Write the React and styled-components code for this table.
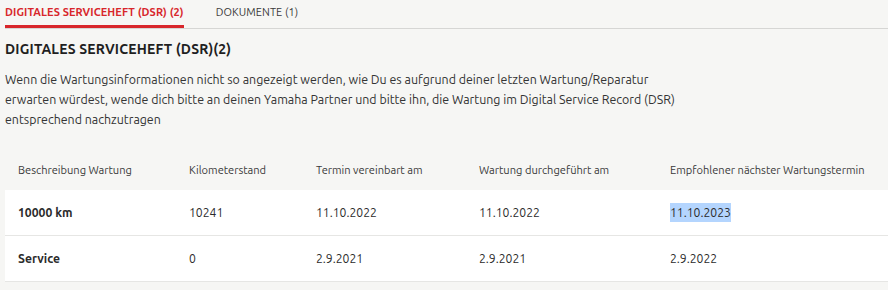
import React from 'react';
import styled, { createGlobalStyle } from 'styled-components';

const GlobalStyle = createGlobalStyle`
  html, body {
    margin: 0;
    padding: 0;
    background: #f6f6f4;
    overflow: hidden;
  }
  body {
    font-family: 'Ubuntu', 'Noto Sans', 'Liberation Sans', sans-serif;
    color: #2b2b2b;
  }
`;

const Page = styled.div`
  padding-left: 5px;
  width: 883px;
`;

const Tabs = styled.div`
  display: flex;
  gap: 32px;
  border-bottom: 1px solid #d6d6d4;
  height: 28px;
`;

const Tab = styled.div`
  font-size: 10.9px;
  font-weight: ${(p) => (p.$active ? 700 : 400)};
  color: ${(p) => (p.$active ? '#d8262b' : '#3a3a3a')};
  text-transform: uppercase;
  padding-top: 6px;
  box-sizing: border-box;
  height: 28px;
  border-bottom: 3px solid ${(p) => (p.$active ? '#d8262b' : 'transparent')};
  margin-bottom: -1px;
  letter-spacing: 0.1px;
`;

const Title = styled.h2`
  margin: 12px 0 0;
  font-size: 13.9px;
  font-weight: 700;
  color: #1f1f1f;
  letter-spacing: 0.2px;
  line-height: 16px;
`;

const Intro = styled.p`
  margin: 12px 0 0;
  font-size: 12.4px;
  line-height: 20px;
  color: #333;
`;

const Table = styled.div`
  margin-top: 21px;
`;

const Row = styled.div`
  display: grid;
  grid-template-columns: 171px 127px 163px 191px 1fr;
  align-items: center;
  height: ${(p) => (p.$head ? '40px' : '45px')};
  background: ${(p) => (p.$head ? 'transparent' : '#ffffff')};
  border-bottom: ${(p) => (p.$head ? 'none' : '1px solid #e6e6e4')};
`;

const Cell = styled.div`
  padding-left: 13px;
  font-size: ${(p) => (p.$head ? '11.1px' : '12.2px')};
  font-weight: ${(p) => (p.$bold ? 700 : 400)};
  color: ${(p) => (p.$head ? '#3a3a3a' : '#2b2b2b')};
  white-space: nowrap;
`;

const Selected = styled.span`
  background: #b4d5fe;
  padding: 3px 0;
`;

const rows = [
  ['10000 km', '10241', '11.10.2022', '11.10.2022', '11.10.2023', true],
  ['Service', '0', '2.9.2021', '2.9.2021', '2.9.2022', false],
];

export default function App() {
  return (
    <Page>
      <GlobalStyle />
      <Tabs>
        <Tab $active>Digitales Serviceheft (DSR) (2)</Tab>
        <Tab>Dokumente (1)</Tab>
      </Tabs>
      <Title>DIGITALES SERVICEHEFT (DSR)(2)</Title>
      <Intro>
        Wenn die Wartungsinformationen nicht so angezeigt werden, wie Du es aufgrund deiner letzten Wartung/Reparatur
        <br />
        erwarten würdest, wende dich bitte an deinen Yamaha Partner und bitte ihn, die Wartung im Digital Service Record (DSR)
        <br />
        entsprechend nachzutragen
      </Intro>
      <Table>
        <Row $head>
          <Cell $head>Beschreibung Wartung</Cell>
          <Cell $head>Kilometerstand</Cell>
          <Cell $head>Termin vereinbart am</Cell>
          <Cell $head>Wartung durchgeführt am</Cell>
          <Cell $head>Empfohlener nächster Wartungstermin</Cell>
        </Row>
        {rows.map(([name, km, agreed, done, next, sel]) => (
          <Row key={name}>
            <Cell $bold>{name}</Cell>
            <Cell>{km}</Cell>
            <Cell>{agreed}</Cell>
            <Cell>{done}</Cell>
            <Cell>{sel ? <Selected>{next}</Selected> : next}</Cell>
          </Row>
        ))}
      </Table>
    </Page>
  );
}
